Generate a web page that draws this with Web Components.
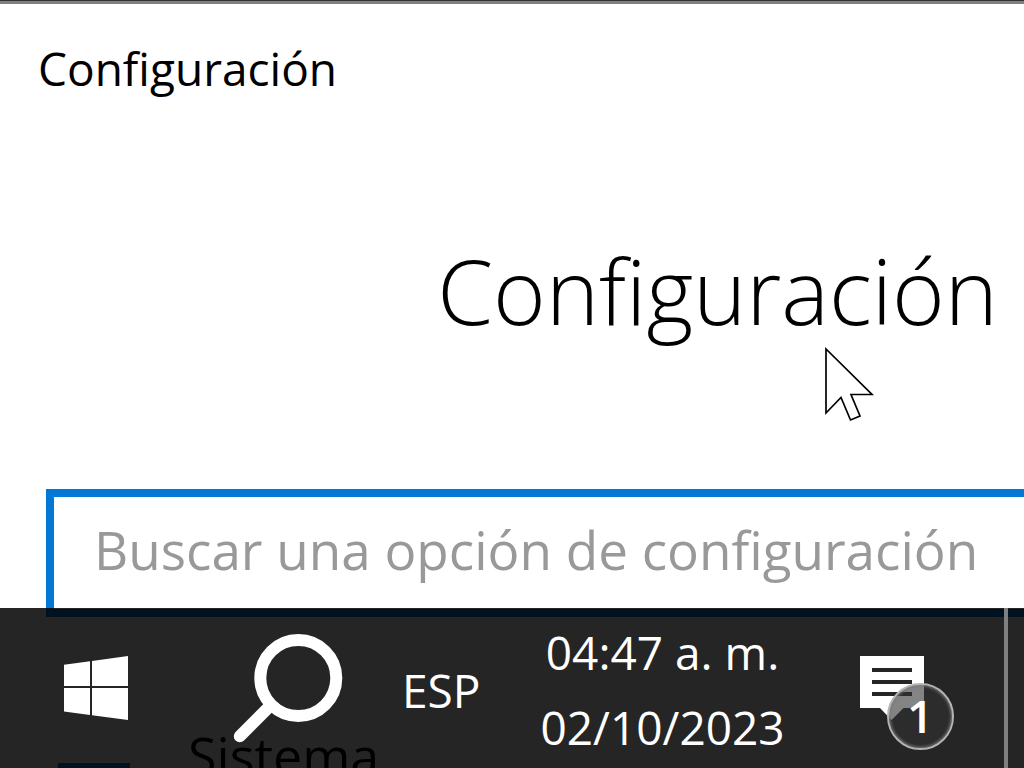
<!DOCTYPE html>
<html lang="es">
<head>
<meta charset="utf-8">
<meta name="viewport" content="width=device-width, initial-scale=1">
<title>Configuración</title>
<style>
  html, body { height: 100%; margin: 0; overflow: hidden; }
  body { background: #fff; color: #000; font-family: "Open Sans", "Noto Sans", sans-serif; }
</style>
</head>
<body>
<desktop-screen>
  <settings-window heading="Configuración">
    <settings-search placeholder="Buscar una opción de configuración"></settings-search>
    <settings-category>Sistema</settings-category>
  </settings-window>
  <task-bar slot="bar">
    <start-button></start-button>
    <search-button></search-button>
    <language-button>ESP</language-button>
    <task-clock time="04:47 a. m." date="02/10/2023"></task-clock>
    <notification-button>1</notification-button>
  </task-bar>
  <mouse-pointer slot="pointer"></mouse-pointer>
</desktop-screen>
<script>
  const define = (name, render) => customElements.define(name, class extends HTMLElement {
    constructor() {
      super();
      this.attachShadow({ mode: 'open' });
    }
    connectedCallback() {
      this.shadowRoot.innerHTML = render(this);
    }
  });

  const buttonReset = 'button { display: block; margin: 0; padding: 0; border: 0; background: none; color: inherit; font: inherit; } svg { display: block; }';

  define('desktop-screen', () => `
    <style>
      :host { display: block; position: relative; height: 100vh; overflow: hidden; }
      .bar { position: absolute; left: 0; right: 0; bottom: 0; }
      .pointer { position: absolute; left: 824px; top: 346px; }
    </style>
    <slot></slot>
    <div class="bar"><slot name="bar"></slot></div>
    <div class="pointer"><slot name="pointer"></slot></div>`);

  define('settings-window', el => `
    <style>
      :host { display: block; border-top: 1px solid #333; }
      .title { border-top: 3px solid #808080; padding: 32px 38px 0; font-size: 46px; line-height: 64px; }
      h1 { margin: 0; padding: 126px 26px 0 0; text-align: right; font-size: 90px; line-height: 128px; font-weight: 300; }
      main { padding: 135px 0 0 46px; }
    </style>
    <header class="title">${el.getAttribute('heading')}</header>
    <h1>${el.getAttribute('heading')}</h1>
    <main><slot></slot></main>`);

  define('settings-search', el => `
    <style>
      :host { display: block; }
      input { display: block; box-sizing: border-box; width: 100%; height: 128px; margin: 0; padding: 0 0 8px 40px;
        border: 8px solid #0078d7; border-right: 0; border-radius: 0; outline: 0; background: #fff;
        font: 53px/72px "Open Sans", "Noto Sans", sans-serif; color: #000; }
      input::placeholder { color: #999; opacity: 1; }
    </style>
    <input type="text" aria-label="${el.getAttribute('placeholder')}" placeholder="${el.getAttribute('placeholder')}">`);

  define('settings-category', () => `
    <style>
      :host { display: block; padding: 102px 0 0 12px; }
      a { display: flex; gap: 58px; color: inherit; text-decoration: none; font-size: 52px; line-height: 72px; }
      i { width: 72px; height: 48px; margin-top: 44px; background: #0078d7; }
    </style>
    <a href="#sistema"><i></i><span><slot></slot></span></a>`);

  define('task-bar', () => `
    <style>
      :host { display: flex; align-items: center; box-sizing: border-box; height: 160px; padding-left: 64px;
        background: rgba(0, 0, 0, .855); color: #fff; }
      .peek { align-self: stretch; width: 16px; margin-left: auto; border-left: 4px solid #808080; }
    </style>
    <slot></slot>
    <div class="peek"></div>`);

  define('start-button', () => `
    <style>:host { display: block; } ${buttonReset}</style>
    <button type="button" aria-label="Inicio">
      <svg width="64" height="64" viewBox="0 0 64 64" fill="#fff">
        <path d="M0 8.8 26 5.2V30H0zM28 4.9 64 0v30H28zM0 32h26v27L0 55.4zM28 32h36v32l-36-4.7z"/>
      </svg>
    </button>`);

  define('search-button', () => `
    <style>:host { display: block; margin-left: 104px; } ${buttonReset}</style>
    <button type="button" aria-label="Buscar">
      <svg width="112" height="112" viewBox="0 0 112 112" fill="none" stroke="#fff">
        <circle cx="66.3" cy="46" r="38" stroke-width="12"/>
        <path d="M38 74 7.800 104.200" stroke-width="12" stroke-linecap="round"/>
      </svg>
    </button>`);

  define('language-button', () => `
    <style>:host { display: block; margin-left: 58px; padding-top: 4px; font-size: 46px; line-height: 64px; } ${buttonReset}</style>
    <button type="button"><slot></slot></button>`);

  define('task-clock', el => `
    <style>
      :host { display: block; margin-left: 60px; padding-top: 4px; font-size: 46px; line-height: 75px; text-align: center; white-space: nowrap; }
      ${buttonReset}
      time { display: block; }
    </style>
    <button type="button"><time>${el.getAttribute('time')}</time><time>${el.getAttribute('date')}</time></button>`);

  define('notification-button', () => `
    <style>
      :host { display: block; margin-left: 75px; }
      ${buttonReset}
      button { position: relative; width: 64px; height: 64px; }
      span { position: absolute; left: 27px; top: 27px; box-sizing: border-box; width: 67px; height: 67px;
        border: 2px solid #b4b4b4; border-radius: 50%; background: rgba(50, 50, 50, .6);
        box-shadow: inset 0 0 3px 1px #777; font-size: 46px; line-height: 60px; font-weight: 600; text-align: center; }
    </style>
    <button type="button" aria-label="Notificaciones">
      <svg width="64" height="64" viewBox="0 0 64 64">
        <path fill="#fff" fill-rule="evenodd" d="M0 0h64v52H43.500L31.500 64 20 52H0zM12 12v4h40v-4zM12 24v4h40v-4zM12 36v4h40v-4z"/>
      </svg>
      <span><slot></slot></span>
    </button>`);

  define('mouse-pointer', () => `
    <style>:host { display: block; } svg { display: block; }</style>
    <svg width="52" height="78" viewBox="0 0 52 78">
      <path d="M2 3v64l15-15.500 9.500 22.500 9.500-4-9-21.500h21z" fill="#fff" stroke="#000" stroke-width="1.700"/>
    </svg>`);
</script>
</body>
</html>
